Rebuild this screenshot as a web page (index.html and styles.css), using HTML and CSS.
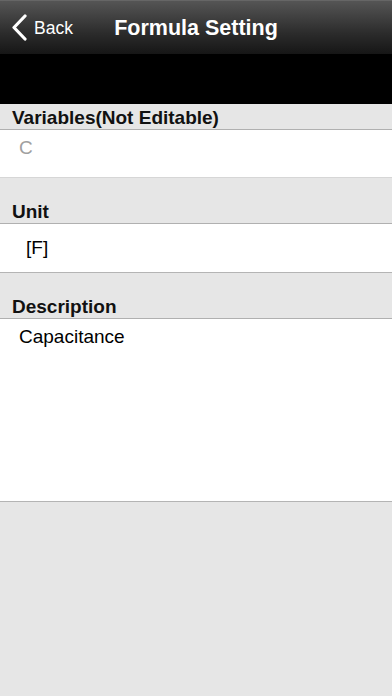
FILE: index.html
```html
<!DOCTYPE html>
<html lang="en">
<head>
    <meta charset="UTF-8">
    <meta name="viewport" content="width=device-width, initial-scale=1.0">
    <title>Formula Setting</title>
    <link rel="stylesheet" href="styles.css">
</head>
<body>

<div class="nav-bar">
    <div class="back-btn">
        <svg class="back-icon" width="16" height="27" viewBox="0 0 16 27">
            <path d="M14 2 L3 13.5 L14 25" fill="none" stroke="#fff" stroke-width="3.2" stroke-linecap="round" stroke-linejoin="round"/>
        </svg>
        <span class="back-text">Back</span>
    </div>
    <div class="nav-title">Formula Setting</div>
</div>

<div class="black-band"></div>

<div class="section-head first">Variables(Not Editable)</div>
<div class="field field-var">
    <span class="muted">C</span>
</div>

<div class="section-head">Unit</div>
<div class="field field-unit">[F]</div>

<div class="section-head">Description</div>
<div class="field field-desc">Capacitance</div>

</body>
</html>
```

FILE: styles.css
```css
body {
    font-family: "Liberation Sans", Arial, sans-serif;
    margin: 0;
    padding: 0;
    background-color: #e6e6e6;
    width: 392px;
    min-height: 696px;
}
.nav-bar {
    height: 54px;
    background: linear-gradient(#555555, #2c2c2c 60%, #161616);
    border-top: 1px solid #666;
    box-sizing: border-box;
    position: relative;
    display: flex;
    align-items: center;
    justify-content: center;
}
.back-btn {
    position: absolute;
    left: 11px;
    top: 13px;
    display: flex;
    align-items: center;
}
.back-icon {
    display: block;
}
.back-text {
    color: #fff;
    font-size: 17.5px;
    margin-left: 7px;
    margin-top: 2px;
}
.nav-title {
    color: #fff;
    font-size: 21.5px;
    font-weight: bold;
    margin-top: 1px;
}
.black-band {
    height: 50px;
    background-color: #000;
}
.section-head {
    height: 46px;
    box-sizing: border-box;
    padding: 0 12px 2px;
    display: flex;
    align-items: flex-end;
    font-size: 19px;
    line-height: 19px;
    font-weight: bold;
    color: #111;
    border-bottom: 1px solid #b0b0b0;
}
.section-head.first {
    height: 26px;
}
.field {
    background-color: #fff;
    box-sizing: border-box;
    font-size: 19px;
    line-height: 22px;
    color: #000;
    border-bottom: 1px solid #b4b4b4;
}
.field-var {
    height: 48px;
    padding: 7px 19px 0;
    border-bottom-color: #d6d6d6;
}
.field-unit {
    height: 49px;
    padding: 13px 26px 0;
}
.field-desc {
    height: 183px;
    padding: 7px 19px 0;
}
.muted {
    color: #a0a0a0;
}
```
